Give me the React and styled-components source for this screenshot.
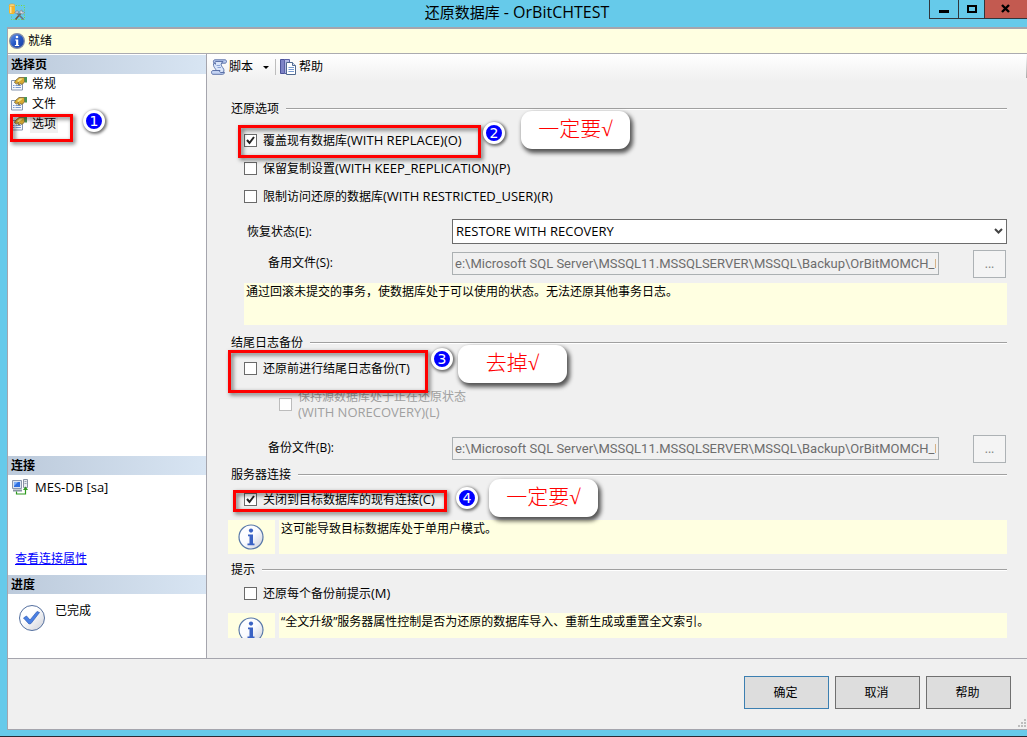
import React from "react";
import styled, { createGlobalStyle, css } from "styled-components";

const GlobalStyle = createGlobalStyle`
  *, *::before, *::after { box-sizing: border-box; }
  body {
    margin: 0;
    font-family: "Open Sans", "Noto Sans CJK SC", sans-serif;
    font-size: 12px;
    line-height: 16px;
    color: #000;
  }
  button, input, select { font: inherit; color: inherit; margin: 0; }
`;

const DialogWindow = styled.div`
  min-height: 100vh;
  display: flex;
  flex-direction: column;
  background: #66caea;
  padding: 0 0 6px 7px;
  border-bottom: 1px solid #2b2b33;
  overflow: hidden;
`;

const TitleBar = styled.header`
  display: grid;
  grid-template-columns: 98px 1fr 98px;
  height: 27px;
`;

const TitleIcon = styled.div`
  padding: 3px 0 0 1px;
`;

const Title = styled.h1`
  margin: 0;
  padding-top: 2px;
  font-size: 15px;
  line-height: 20px;
  font-weight: 400;
  text-align: center;

  span { font-size: 16px; }
`;

const WindowControls = styled.div`
  display: grid;
  grid-template-columns: 29px 26px 43px;
  height: 19px;
`;

const ControlButton = styled.button`
  display: flex;
  align-items: center;
  justify-content: center;
  padding: 0;
  border: solid #30363c;
  border-width: 0 0 1px 1px;
  background: ${(p) => (p.$danger ? "#c35a50" : "#66caea")};
`;

const Client = styled.div`
  flex: 1;
  display: flex;
  flex-direction: column;
  background: #f0f0f0;
  border-left: 1px solid #a5a5ad;
  border-bottom: 1px solid #a5a5ad;
`;

const StatusBar = styled.div`
  display: flex;
  align-items: center;
  gap: 3px;
  height: 27px;
  padding-left: 1px;
  background: #ffffe1;
  border-top: 2px solid #a5a5ad;
  border-bottom: 1px solid #ababb0;
`;

const Body = styled.div`
  flex: 1;
  display: flex;
  border-bottom: 1px solid #a5a5ad;
`;

const Sidebar = styled.aside`
  flex: 0 0 199px;
  display: flex;
  flex-direction: column;
  padding-top: 1px;
  background: #fff;
  border-right: 1px solid #a5a5ad;
`;

const Panel = styled.section`
  display: flex;
  flex-direction: column;
  ${(p) => (p.$grow ? "flex: 1;" : `height: ${p.$height}px;`)}
`;

const PanelTitle = styled.h2`
  margin: 0;
  padding: 0 3px;
  font-size: 12px;
  line-height: 19px;
  font-weight: 700;
  background: linear-gradient(90deg, #bccadb, #d8e5f3);
`;

const PageList = styled.ul`
  list-style: none;
  margin: 0;
  padding: 0 0 0 3px;
`;

const PageItem = styled.li`
  position: relative;
  height: 20px;
`;

const PageButton = styled.button`
  display: flex;
  align-items: center;
  gap: 3px;
  height: 20px;
  padding: 0;
  border: 0;
  background: none;

  span {
    padding: 0 2px;
    line-height: 18px;
    background: ${(p) => (p.$selected ? "#f0f0f0" : "transparent")};
  }
`;

const ServerRow = styled.div`
  display: flex;
  align-items: center;
  gap: 7px;
  height: 24px;
  padding-left: 4px;
  font-size: 13px;
`;

const PropertiesLink = styled.a`
  margin: auto 7px 8px;
  color: #00f;
`;

const ProgressRow = styled.div`
  display: flex;
  gap: 9px;
  padding: 9px 10px;
`;

const Main = styled.main`
  flex: 1;
  min-width: 0;
  padding-bottom: 20px;
`;

const Toolbar = styled.div`
  display: flex;
  align-items: center;
  height: 27px;
  padding: 0 0 2px 4px;
  background:
    linear-gradient(#fff, #a9a9a9) right top / 1px 24px no-repeat,
    linear-gradient(#fff, #f0f0f0);
`;

const ToolButton = styled.button`
  display: flex;
  align-items: center;
  gap: 2px;
  padding: 0;
  border: 0;
  background: none;
`;

const Arrow = styled.span`
  margin: 2px 6px 0 8px;
  border: solid transparent;
  border-width: 3px 3px 0;
  border-top-color: #000;
`;

const Separator = styled.span`
  width: 1px;
  height: 16px;
  margin-right: 4px;
  background: #bdbdbd;
`;

const Form = styled.form`
  display: flex;
  flex-direction: column;
  padding: 20px 20px 0 24px;
`;

const GroupTitle = styled.h3`
  display: flex;
  align-items: center;
  gap: 7px;
  margin: ${(p) => p.$top || 0}px 0 ${(p) => p.$bottom}px;
  font-size: 12px;
  font-weight: 400;

  &::after {
    content: "";
    flex: 1;
    height: 2px;
    background: #a0a0a0;
    border-bottom: 1px solid #fff;
  }
`;

const OptionRow = styled.div`
  position: relative;
  display: flex;
  align-items: center;
  height: ${(p) => (p.$tall ? 32 : 28)}px;
  margin-top: ${(p) => (p.$tall ? 6 : 0)}px;
  padding-left: ${(p) => (p.$tall ? 48 : 13)}px;
`;

const OptionLabel = styled.label`
  display: flex;
  align-items: center;
  gap: 6px;
  color: ${(p) => (p.$muted ? "#a0a0a0" : "#000")};
`;

const Latin = styled.span`
  font-size: 13px;
  line-height: 14px;
`;

const Box = styled.span`
  display: grid;
  width: 13px;
  height: 13px;
  margin-bottom: 1px;

  > * { grid-area: 1 / 1; }
  svg { pointer-events: none; }
`;

const BoxInput = styled.input`
  appearance: none;
  width: 13px;
  height: 13px;
  border: 1px solid #6a6a6a;
  background: #fff;

  &:disabled { border-color: #bcbcbc; }
  & + svg { visibility: hidden; }
  &:checked + svg { visibility: visible; }
`;

const Field = styled.div`
  display: flex;
  align-items: center;
  margin-top: ${(p) => p.$top}px;
`;

const FieldLabel = styled.label`
  flex: 0 0 221px;
  padding-left: ${(p) => (p.$indent ? 37 : 16)}px;
  padding-bottom: ${(p) => (p.$indent ? 2 : 0)}px;
`;

const SelectWrap = styled.div`
  flex: 1;
  display: grid;
  align-items: center;

  > * { grid-area: 1 / 1; }
  svg { justify-self: end; margin-right: 4px; pointer-events: none; }
`;

const Select = styled.select`
  appearance: none;
  width: 100%;
  height: 25px;
  padding: 0 20px 2px 3px;
  border: 1px solid #6c6c6c;
  border-radius: 0;
  background: #fff;
  font-size: 13px;
`;

const PathInput = styled.input`
  flex: 1;
  min-width: 0;
  height: 23px;
  margin-bottom: 2px;
  padding: 0 2px;
  border: 1px solid #abb0b2;
  background: #f0f0f0;
  font-family: Roboto, "Noto Sans CJK SC", sans-serif;
  font-size: 13px;
  color: #6d6d6d;
`;

const BrowseButton = styled.button`
  width: 33px;
  height: 28px;
  margin: 0 1px 0 34px;
  padding: 0;
  border: 1px solid #adb2b5;
  background: #f4f4f4;
  color: #838383;
`;

const Note = styled.p`
  margin: 5px 0 0 13px;
  height: 42px;
  padding: 1px 2px;
  background: #ffffe1;
`;

const InfoRow = styled.div`
  display: grid;
  grid-template-columns: 47px 1fr;
  gap: 4px;
  height: ${(p) => p.$height}px;
  margin: ${(p) => p.$top}px 0 0 -3px;
  overflow: hidden;
`;

const InfoCell = styled.div`
  padding: ${(p) => (p.$icon ? "4px 10px" : "1px 2px")};
  background: #ffffe1;
`;

const Footer = styled.footer`
  display: flex;
  justify-content: flex-end;
  gap: 6px;
  height: 70px;
  padding: 17px 0 0;
`;

const DialogButton = styled.button`
  width: 85px;
  height: 33px;
  padding: 0 2px 0 0;
  border: 1px solid ${(p) => (p.$primary ? "#3c7fb1" : "#707070")};
  background: #ddd;
`;

const Grip = styled.svg`
  align-self: flex-end;
`;

/* Tutorial marks that float above the dialog */
const at = css`
  position: absolute;
  z-index: 1;
  left: ${(p) => p.$x}px;
  top: ${(p) => p.$y}px;
  pointer-events: none;
`;

const Frame = styled.span`
  ${at}
  width: ${(p) => p.$w}px;
  height: ${(p) => p.$h}px;
  border: 3px solid #f00;
  filter: drop-shadow(2px 2px 2px rgba(0, 0, 0, 0.6));
`;

const Step = styled.span`
  ${at}
  width: 22px;
  height: 22px;
  border: 3px solid #fff;
  border-radius: 50%;
  background: #00f;
  color: #fff;
  font-family: "DejaVu Sans", sans-serif;
  font-size: 14px;
  font-weight: 400;
  text-align: center;
  box-shadow: 1px 1px 3px 1px rgba(0, 0, 0, 0.55);
`;

const Callout = styled.span`
  ${at}
  width: 109px;
  height: 38px;
  border-radius: 11px;
  background: #fff;
  color: #f00;
  font-family: "Liberation Serif", "Noto Sans CJK SC", serif;
  font-size: 21px;
  font-weight: 300;
  line-height: 36px;
  text-align: center;
  box-shadow: 2px 3px 4px 1px rgba(0, 0, 0, 0.65);
`;

function InfoIcon({ size }) {
  const dark = size < 20;
  return (
    <svg width={size} height={size} viewBox="0 0 26 26" aria-hidden="true">
      <defs>
        <linearGradient id={"info" + size} x1="0" y1="0" x2="1" y2="1">
          <stop offset="0" stopColor={dark ? "#6c9ae8" : "#fff"} />
          <stop offset="0.5" stopColor={dark ? "#2457c5" : "#fafbff"} />
          <stop offset="1" stopColor={dark ? "#1a3fa0" : "#c9ccd8"} />
        </linearGradient>
      </defs>
      <circle cx="13" cy="13" r="12" fill={`url(#info${size})`} stroke={dark ? "#8790a8" : "#5777a8"} strokeWidth={dark ? 2 : 1.2} />
      <circle cx="13" cy="6.6" r="2.1" fill={dark ? "#fff" : "#3a62c4"} />
      <path d="M10 10.5h5v9h1.5v1.8h-7v-1.8h2v-7.2H10z" fill={dark ? "#fff" : "#3a62c4"} />
    </svg>
  );
}

function DatabaseToolsIcon() {
  return (
    <svg width="17" height="18" viewBox="0 0 17 18" aria-hidden="true">
      <path d="M8 2.500h8.500v14H3.500V12" fill="none" stroke="#7bd63c" strokeDasharray="1 1.500" />
      <path d="M1 2v7.500c0 2 6 2 6 0V2z" fill="#f4b52e" />
      <path d="M2 3v7h1.500V3z" fill="#fde59a" />
      <ellipse cx="4" cy="2.200" rx="3" ry="1.300" fill="#fbd777" stroke="#d8952a" strokeWidth=".5" />
      <path d="M7.500 16.500 13 10" stroke="#6c5a3c" strokeWidth="1.600" />
      <path d="m8 9 7.500 7.500" stroke="#6b747f" strokeWidth="1.600" />
      <path d="m6.500 9.500 2.500-2 2 1.500-2 2z" fill="#b9c2cf" stroke="#6b747f" strokeWidth=".5" />
      <path d="M12 10.500V8l2-1v2h2.500l-1 2z" fill="#dbe2ea" stroke="#737c88" strokeWidth=".6" />
    </svg>
  );
}

function PageIcon() {
  return (
    <svg width="16" height="16" viewBox="0 0 16 16" aria-hidden="true">
      <path d="M.5 4.500h11v9.500H.5z" fill="#f7f9fd" stroke="#8696b0" />
      <path d="M2 9.500h1.500m1 0H10M2 11.500h1.500m1 0H10" stroke="#7a9bd0" />
      <path d="m3.500 6.500 1-2L8 1.500h5.500V6L11 8.500 9.500 7.500 8.500 9 7 8.500l.5-2L5.500 8z" fill="#d8aa30" stroke="#6f6038" strokeWidth=".8" />
      <path d="m6 5 3-2.500h3L9 5 7.500 6z" fill="#f8e48a" />
      <path d="M13 1h3v5.500h-2z" fill="#4b9455" />
    </svg>
  );
}

function ScriptIcon() {
  return (
    <svg width="16" height="16" viewBox="0 0 16 16" aria-hidden="true">
      <path d="M4.500 1.500h9L10 5c0 3 3.500 4 3 7.500L10.500 14H5c1.500-4-3-5-2.500-9z" fill="#dbe6fa" stroke="#6078ad" />
      <path d="M4 .800h10c2 0 2 3.400 0 3.400h-3.500L12 2.500H5C3.500 2.500 3.500 5 5 5 2 5 1.500.800 4 .800z" fill="#b9cbf0" stroke="#5168a0" strokeWidth=".9" />
      <path d="M2 11.500h7c-1 1 0 2 1 2h3.500c-.5 1.500-1 1.800-2 1.800H2c-2 0-2-3.800 0-3.800z" fill="#c4d3f3" stroke="#5168a0" strokeWidth=".9" />
      <path d="M5.500 6.500H9m-2.500 2H10" stroke="#8ca4d6" />
    </svg>
  );
}

function HelpIcon() {
  return (
    <svg width="17" height="16" viewBox="0 0 17 16" aria-hidden="true">
      <path d="M.5.500h4v14h-4z" fill="#7d83c6" stroke="#4b5299" />
      <path d="M4.500.500h5v14h-5z" fill="#b3b8e4" stroke="#5b62a6" />
      <path d="M6.500 3.500h6l3 3v9h-9z" fill="#fff" stroke="#51698f" />
      <path d="M12.500 3.500v3h3" fill="#d4e2f6" stroke="#51698f" />
      <path d="M8.500 8.500H14m-5.500 2H14m-5.500 2H14" stroke="#789bd0" />
    </svg>
  );
}

function ServerIcon() {
  return (
    <svg width="16" height="16" viewBox="0 0 16 16" aria-hidden="true">
      <path d="M.5 1.500h9v8h-9z" fill="#dce4f0" stroke="#8996ac" />
      <path d="M2 3h6v5H2z" fill="#2f6fe0" />
      <path d="M2 3h4L2 7z" fill="#7fb1fa" />
      <path d="M1 11.500h9" stroke="#8a94a5" strokeWidth="2" />
      <path d="M11.500.500h4v8h-4z" fill="#e7ebf1" stroke="#8893a5" />
      <path d="M12.500 2.500h2m-2 2h2" stroke="#9aa4b5" />
      <path d="M4.500 12.500V15h9v-5" fill="none" stroke="#2d9a1e" strokeWidth="1.200" />
      <path d="m11 11 2.500-3.500L16 11z" fill="#2d9a1e" />
    </svg>
  );
}

function DoneIcon() {
  return (
    <svg width="28" height="28" viewBox="0 0 28 28" aria-hidden="true">
      <defs>
        <linearGradient id="done" x1="0" y1="0" x2="1" y2="1">
          <stop offset="0.4" stopColor="#fff" />
          <stop offset="1" stopColor="#ccced6" />
        </linearGradient>
      </defs>
      <circle cx="14" cy="15" r="12.500" fill="url(#done)" stroke="#55709f" />
      <path d="m5.500 15 3-2 3.500 4 7-8.500 2.500 1L13 20.500l-2 .5z" fill="#4a80e4" stroke="#2f5cb5" strokeWidth=".7" />
    </svg>
  );
}

function CheckOption({ label, latin, wrap, checked, disabled, children }) {
  return (
    <OptionRow $tall={wrap}>
      <OptionLabel $muted={disabled}>
        <Box>
          <BoxInput type="checkbox" defaultChecked={checked} disabled={disabled} />
          <svg width="13" height="13" viewBox="0 0 13 13" aria-hidden="true">
            <path d="m3 6 2.500 3L10 3" fill="none" stroke="#222" strokeWidth="2" />
          </svg>
        </Box>
        <span>
          {label}
          {wrap && <br />}
          <Latin>{latin}</Latin>
        </span>
      </OptionLabel>
      {children}
    </OptionRow>
  );
}

function PathField({ id, label, value, top }) {
  return (
    <Field $top={top}>
      <FieldLabel $indent htmlFor={id}>{label}</FieldLabel>
      <PathInput id={id} defaultValue={value} disabled />
      <BrowseButton type="button" disabled aria-label="浏览">...</BrowseButton>
    </Field>
  );
}

const BACKUP_DIR = "e:\\Microsoft SQL Server\\MSSQL11.MSSQLSERVER\\MSSQL\\Backup\\";

export default function App() {
  return (
    <>
      <GlobalStyle />
      <DialogWindow>
        <TitleBar>
          <TitleIcon><DatabaseToolsIcon /></TitleIcon>
          <Title>还原数据库<span> - OrBitCHTEST</span></Title>
          <WindowControls>
            <ControlButton aria-label="最小化">
              <svg width="10" height="10"><path d="M0 6h10v3H0z" /></svg>
            </ControlButton>
            <ControlButton aria-label="最大化">
              <svg width="10" height="12"><path d="M1 3h8v6H1z" fill="none" stroke="#000" strokeWidth="2" /></svg>
            </ControlButton>
            <ControlButton $danger aria-label="关闭">
              <svg width="10" height="10"><path d="m1 1 7 7M8 1 1 8" stroke="#000" strokeWidth="2.400" /></svg>
            </ControlButton>
          </WindowControls>
        </TitleBar>

        <Client>
          <StatusBar><InfoIcon size={16} />就绪</StatusBar>
          <Body>
            <Sidebar>
              <Panel $grow>
                <PanelTitle>选择页</PanelTitle>
                <PageList>
                  <PageItem><PageButton><PageIcon /><span>常规</span></PageButton></PageItem>
                  <PageItem><PageButton><PageIcon /><span>文件</span></PageButton></PageItem>
                  <PageItem>
                    <PageButton $selected><PageIcon /><span>选项</span></PageButton>
                    <Frame $x={-1} $y={0} $w={63} $h={28} />
                    <Step $x={72} $y={-4}>1</Step>
                  </PageItem>
                </PageList>
              </Panel>
              <Panel $height={119}>
                <PanelTitle>连接</PanelTitle>
                <ServerRow><ServerIcon />MES-DB [sa]</ServerRow>
                <PropertiesLink href="#connection">查看连接属性</PropertiesLink>
              </Panel>
              <Panel $height={83}>
                <PanelTitle>进度</PanelTitle>
                <ProgressRow><DoneIcon />已完成</ProgressRow>
              </Panel>
            </Sidebar>

            <Main>
              <Toolbar>
                <ToolButton><ScriptIcon />脚本<Arrow /></ToolButton>
                <Separator />
                <ToolButton><HelpIcon />帮助</ToolButton>
              </Toolbar>
              <Form>
                <GroupTitle $bottom={10}>还原选项</GroupTitle>
                <CheckOption checked label="覆盖现有数据库" latin="(WITH REPLACE)(O)">
                  <Frame $x={7} $y={-2} $w={243} $h={33} />
                  <Step $x={252} $y={-5}>2</Step>
                  <Callout $x={290} $y={-16}>一定要√</Callout>
                </CheckOption>
                <CheckOption label="保留复制设置" latin="(WITH KEEP_REPLICATION)(P)" />
                <CheckOption label="限制访问还原的数据库" latin="(WITH RESTRICTED_USER)(R)" />
                <Field $top={8}>
                  <FieldLabel htmlFor="state">恢复状态(E):</FieldLabel>
                  <SelectWrap>
                    <Select id="state" defaultValue="recovery">
                      <option value="recovery">RESTORE WITH RECOVERY</option>
                    </Select>
                    <svg width="9" height="7" aria-hidden="true">
                      <path d="m1 1 3.500 3.500L8 1" fill="none" stroke="#444" strokeWidth="2" />
                    </svg>
                  </SelectWrap>
                </Field>
                <PathField id="standby" top={6} label="备用文件(S):" value={BACKUP_DIR + "OrBitMOMCH_R"} />
                <Note>通过回滚未提交的事务，使数据库处于可以使用的状态。无法还原其他事务日志。</Note>

                <GroupTitle $top={10} $bottom={4}>结尾日志备份</GroupTitle>
                <CheckOption label="还原前进行结尾日志备份" latin="(T)">
                  <Frame $x={-3} $y={-5} $w={200} $h={43} />
                  <Step $x={200} $y={-7}>3</Step>
                  <Callout $x={227} $y={-10}>去掉√</Callout>
                </CheckOption>
                <CheckOption wrap disabled label="保持源数据库处于正在还原状态" latin="(WITH NORECOVERY)(L)" />
                <PathField id="tail" top={14} label="备份文件(B):" value={BACKUP_DIR + "OrBitMOMCH_L"} />

                <GroupTitle $top={4} $bottom={3}>服务器连接</GroupTitle>
                <CheckOption checked label="关闭到目标数据库的现有连接" latin="(C)">
                  <Frame $x={2} $y={4} $w={214} $h={22} />
                  <Step $x={225} $y={1}>4</Step>
                  <Callout $x={258} $y={-7}>一定要√</Callout>
                </CheckOption>
                <InfoRow $top={6} $height={34}>
                  <InfoCell $icon><InfoIcon size={26} /></InfoCell>
                  <InfoCell>这可能导致目标数据库处于单用户模式。</InfoCell>
                </InfoRow>

                <GroupTitle $top={8} $bottom={2}>提示</GroupTitle>
                <CheckOption label="还原每个备份前提示" latin="(M)" />
                <InfoRow $top={5} $height={25}>
                  <InfoCell $icon><InfoIcon size={26} /></InfoCell>
                  <InfoCell>“全文升级”服务器属性控制是否为还原的数据库导入、重新生成或重置全文索引。</InfoCell>
                </InfoRow>
              </Form>
            </Main>
          </Body>
          <Footer>
            <DialogButton $primary>确定</DialogButton>
            <DialogButton>取消</DialogButton>
            <DialogButton>帮助</DialogButton>
            <Grip width="10" height="10" aria-hidden="true">
              <path d="M7 0h2v2H7zM4 3h2v2H4zM7 3h2v2H7zM1 6h2v2H1zM4 6h2v2H4zM7 6h2v2H7z" fill="#bdbdbd" />
            </Grip>
          </Footer>
        </Client>
      </DialogWindow>
    </>
  );
}
